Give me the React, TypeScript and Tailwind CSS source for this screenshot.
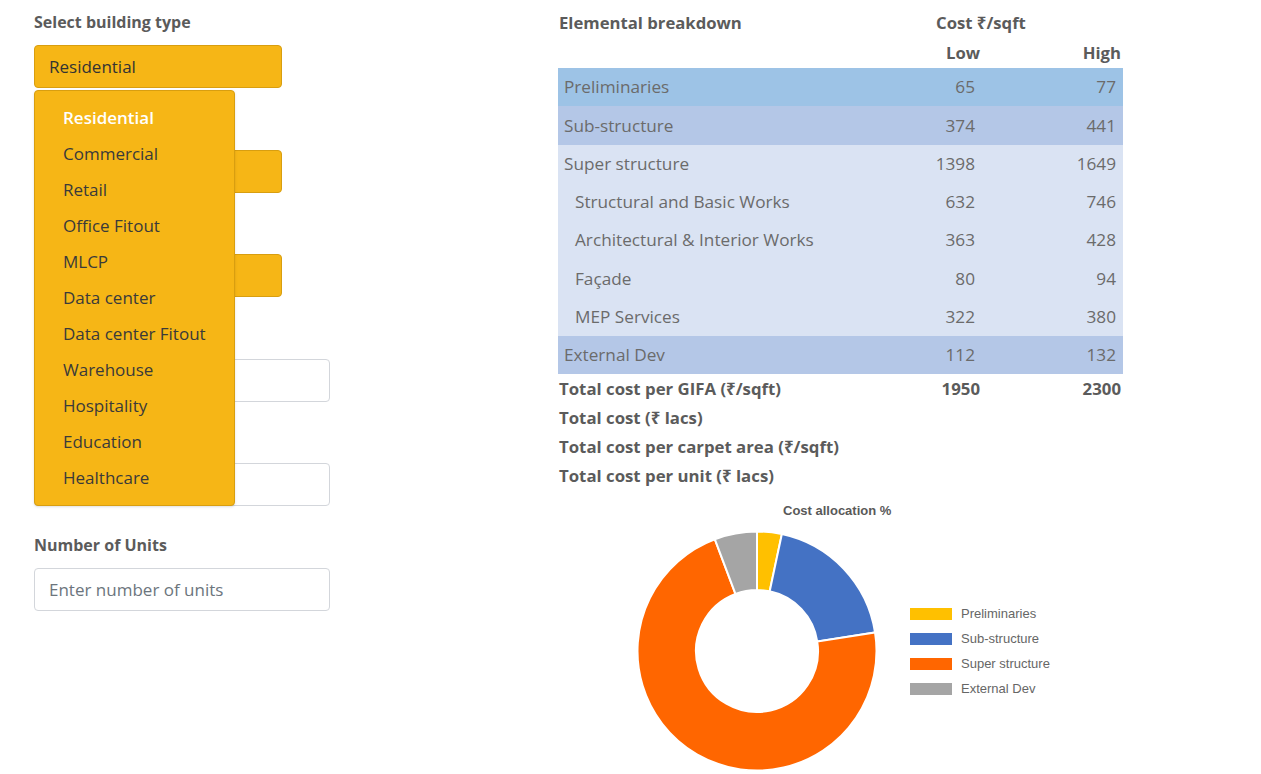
import React from "react";

const font = { fontFamily: '"Open Sans", "Noto Sans", sans-serif' };

const options = [
  "Residential",
  "Commercial",
  "Retail",
  "Office Fitout",
  "MLCP",
  "Data center",
  "Data center Fitout",
  "Warehouse",
  "Hospitality",
  "Education",
  "Healthcare",
];

type Row = { name: string; low: number; high: number; bg: string; indent?: boolean };

const rows: Row[] = [
  { name: "Preliminaries", low: 65, high: 77, bg: "bg-[#9dc3e6]" },
  { name: "Sub-structure", low: 374, high: 441, bg: "bg-[#b4c7e7]" },
  { name: "Super structure", low: 1398, high: 1649, bg: "bg-[#dae3f3]" },
  { name: "Structural and Basic Works", low: 632, high: 746, bg: "bg-[#dae3f3]", indent: true },
  { name: "Architectural & Interior Works", low: 363, high: 428, bg: "bg-[#dae3f3]", indent: true },
  { name: "Façade", low: 80, high: 94, bg: "bg-[#dae3f3]", indent: true },
  { name: "MEP Services", low: 322, high: 380, bg: "bg-[#dae3f3]", indent: true },
  { name: "External Dev", low: 112, high: 132, bg: "bg-[#b4c7e7]" },
];

const slices = [
  { name: "Preliminaries", value: 65, color: "#ffc000" },
  { name: "Sub-structure", value: 374, color: "#4472c4" },
  { name: "Super structure", value: 1398, color: "#ff6600" },
  { name: "External Dev", value: 112, color: "#a5a5a5" },
];

function arcPath(cx: number, cy: number, r0: number, r1: number, a0: number, a1: number) {
  const p = (r: number, a: number) => [cx + r * Math.cos(a), cy + r * Math.sin(a)];
  const large = a1 - a0 > Math.PI ? 1 : 0;
  const [x0, y0] = p(r1, a0);
  const [x1, y1] = p(r1, a1);
  const [x2, y2] = p(r0, a1);
  const [x3, y3] = p(r0, a0);
  return `M${x0} ${y0} A${r1} ${r1} 0 ${large} 1 ${x1} ${y1} L${x2} ${y2} A${r0} ${r0} 0 ${large} 0 ${x3} ${y3} Z`;
}

function Donut() {
  const total = slices.reduce((s, x) => s + x.value, 0);
  let a = -Math.PI / 2;
  const cx = 120;
  const cy = 120;
  return (
    <svg width="240" height="242" viewBox="0 0 240 242">
      {slices.map((s) => {
        const a0 = a;
        const a1 = a + (s.value / total) * Math.PI * 2;
        a = a1;
        return (
          <path
            key={s.name}
            d={arcPath(cx, cy, 61, 119.5, a0, a1)}
            fill={s.color}
            stroke="#ffffff"
            strokeWidth="2"
          />
        );
      })}
    </svg>
  );
}

function Label({ children }: { children?: React.ReactNode }) {
  return <div className="h-[23px] text-[16px] font-bold text-[#5b5b5b] leading-[23px]">{children}</div>;
}

function YellowSelect({ value }: { value?: string }) {
  return (
    <div className="mt-[11px] flex h-[43px] w-[248px] items-center rounded-[4px] border border-[#d89e10] bg-[#f6b616] pl-[14px] text-[17px] text-[#333333]">
      {value}
    </div>
  );
}

function Input({ placeholder }: { placeholder?: string }) {
  return (
    <div className="mt-[11px] flex h-[43px] w-[296px] items-center rounded-[4px] border border-[#d3d6db] bg-white pl-[14px] text-[17px] text-[#6c757d]">
      {placeholder}
    </div>
  );
}

export default function App() {
  return (
    <div className="relative h-[774px] w-[1261px] overflow-hidden bg-white" style={font}>
      <div className="flex">
        {/* Left form */}
        <div className="relative ml-[34px] mt-[11px] w-[296px]">
          <div className="flex flex-col gap-[27.6px]">
            <div>
              <Label>Select building type</Label>
              <YellowSelect value="Residential" />
            </div>
            <div>
              <Label />
              <YellowSelect />
            </div>
            <div>
              <Label />
              <YellowSelect />
            </div>
            <div>
              <Label />
              <Input />
            </div>
            <div>
              <Label />
              <Input />
            </div>
            <div>
              <Label>Number of Units</Label>
              <Input placeholder="Enter number of units" />
            </div>
          </div>
          {/* Dropdown menu */}
          <div className="absolute left-0 top-[79px] w-[201px] rounded-[4px] border border-[#d89e10] bg-[#f6b616] py-[9px] shadow-sm">
            {options.map((o, i) => (
              <div
                key={o}
                className={`flex h-[36px] items-center pl-[28px] text-[17px] ${
                  i === 0 ? "font-semibold text-white" : "text-[#3a3a3a]"
                }`}
              >
                {o}
              </div>
            ))}
          </div>
        </div>

        {/* Right table */}
        <div className="ml-[228px] mt-[8px] w-[565px]">
          <div className="flex h-[30px] items-center text-[16.7px] font-bold text-[#5b5b5b]">
            <div className="w-[378px] pl-[1px]">Elemental breakdown</div>
            <div>Cost ₹/sqft</div>
          </div>
          <div className="flex h-[30px] items-center text-[16.7px] font-bold text-[#5b5b5b]">
            <div className="w-[282px]" />
            <div className="w-[140px] text-right">Low</div>
            <div className="w-[141px] text-right">High</div>
          </div>
          <div>
            {rows.map((r) => (
              <div key={r.name} className={`flex h-[38.3px] items-center text-[17.2px] text-[#6b6b6b] ${r.bg}`}>
                <div className={`w-[282px] ${r.indent ? "pl-[17px]" : "pl-[6px]"}`}>{r.name}</div>
                <div className="w-[135px] text-right">{r.low}</div>
                <div className="w-[141px] text-right">{r.high}</div>
              </div>
            ))}
          </div>
          <div className="text-[16.8px] font-bold text-[#5b5b5b]">
            <div className="flex h-[29px] items-center">
              <div className="w-[282px] pl-[1px]">Total cost per GIFA (₹/sqft)</div>
              <div className="w-[140px] text-right">1950</div>
              <div className="w-[141px] text-right">2300</div>
            </div>
            <div className="flex h-[29px] items-center pl-[1px]">Total cost (₹ lacs)</div>
            <div className="flex h-[29px] items-center pl-[1px]">Total cost per carpet area (₹/sqft)</div>
            <div className="flex h-[29px] items-center pl-[1px]">Total cost per unit (₹ lacs)</div>
          </div>

          {/* Chart */}
          <div className="relative mt-[11px] h-[270px]" style={{ fontFamily: '"Liberation Sans", Arial, sans-serif' }}>
            <div className="absolute left-[225px] top-0 text-[13px] font-bold text-[#595959]">Cost allocation %</div>
            <div className="absolute left-[79px] top-[30px]">
              <Donut />
            </div>
            <div className="absolute left-[352px] top-[105px] flex flex-col gap-[10px]">
              {slices.map((s) => (
                <div key={s.name} className="flex h-[15px] items-center gap-[9px] text-[13px] text-[#666666]">
                  <div className="h-[12px] w-[42px]" style={{ backgroundColor: s.color }} />
                  <span>{s.name}</span>
                </div>
              ))}
            </div>
          </div>
        </div>
      </div>
    </div>
  );
}
